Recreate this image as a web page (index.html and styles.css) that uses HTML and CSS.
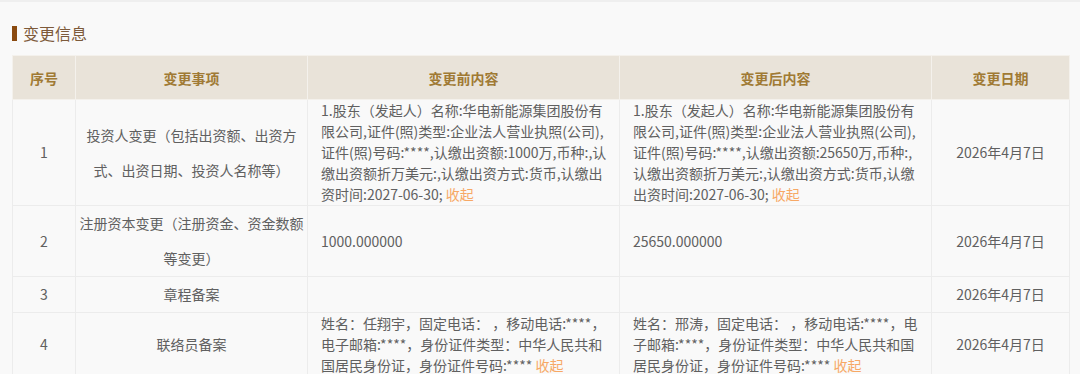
FILE: index.html
```html
<!DOCTYPE html>
<html lang="zh-CN">
<head>
<meta charset="utf-8">
<title>变更信息</title>
<link rel="stylesheet" href="styles.css">
</head>
<body>
<div class="page">
  <h2 class="section-title"><span class="marker"></span>变更信息</h2>
  <table class="change-table">
    <colgroup>
      <col class="c-no"><col class="c-item"><col class="c-before"><col class="c-after"><col class="c-date">
    </colgroup>
    <thead>
      <tr><th>序号</th><th>变更事项</th><th>变更前内容</th><th>变更后内容</th><th>变更日期</th></tr>
    </thead>
    <tbody>
      <tr>
        <td class="center">1</td>
        <td class="center item">投资人变更（包括出资额、出资方式、出资日期、投资人名称等）</td>
        <td class="content"><div class="txt">1.股东（发起人）名称:华电新能源集团股份有限公司,证件(照)类型:企业法人营业执照(公司),证件(照)号码:****,认缴出资额:1000万,币种:,认缴出资额折万美元:,认缴出资方式:货币,认缴出资时间:2027-06-30; <a class="toggle">收起</a></div></td>
        <td class="content"><div class="txt">1.股东（发起人）名称:华电新能源集团股份有限公司,证件(照)类型:企业法人营业执照(公司),证件(照)号码:****,认缴出资额:25650万,币种:,认缴出资额折万美元:,认缴出资方式:货币,认缴出资时间:2027-06-30; <a class="toggle">收起</a></div></td>
        <td class="center">2026年4月7日</td>
      </tr>
      <tr>
        <td class="center">2</td>
        <td class="center item">注册资本变更（注册资金、资金数额等变更）</td>
        <td class="content"><div class="txt">1000.000000</div></td>
        <td class="content"><div class="txt">25650.000000</div></td>
        <td class="center">2026年4月7日</td>
      </tr>
      <tr>
        <td class="center">3</td>
        <td class="center item">章程备案</td>
        <td class="content"></td>
        <td class="content"></td>
        <td class="center">2026年4月7日</td>
      </tr>
      <tr>
        <td class="center">4</td>
        <td class="center item">联络员备案</td>
        <td class="content"><div class="txt">姓名：任翔宇，固定电话： ，移动电话:****，电子邮箱:****，身份证件类型：中华人民共和国居民身份证，身份证件号码:**** <a class="toggle">收起</a></div></td>
        <td class="content"><div class="txt">姓名：邢涛，固定电话： ，移动电话:****，电子邮箱:****，身份证件类型：中华人民共和国居民身份证，身份证件号码:**** <a class="toggle">收起</a></div></td>
        <td class="center">2026年4月7日</td>
      </tr>
    </tbody>
  </table>
</div>
</body>
</html>
```
FILE: styles.css
```css
html, body {
  margin: 0;
  padding: 0;
  background: #f9f9f9;
}
body {
  font-family: "Noto Sans CJK SC", "Noto Sans", sans-serif;
  color: #606060;
  font-size: 14px;
  border-top: 2px solid #efefef;
}
.page {
  padding: 20px 11px 0 12px;
}
.section-title {
  display: flex;
  align-items: center;
  gap: 6px;
  margin: 0 0 11px 0;
  height: 22px;
  font-size: 16px;
  font-weight: normal;
  color: #7d5a3a;
  line-height: 22px;
}
.marker {
  width: 5px;
  height: 15px;
  background: #8a4a10;
}
.change-table {
  width: 1057px;
  border-collapse: collapse;
  table-layout: fixed;
}
.c-no { width: 63px; }
.c-item { width: 232px; }
.c-before { width: 312px; }
.c-after { width: 312px; }
.c-date { width: 138px; }
.change-table th {
  height: 43px;
  background: #e9e3d9;
  color: #a07a34;
  font-weight: bold;
  font-size: 14px;
  border: 1px solid #f4f1ec;
  padding: 0;
}
.change-table td {
  border: 1px solid #ececec;
  padding: 0;
  vertical-align: middle;
  line-height: 35px;
}
.change-table td.center {
  text-align: center;
}
.change-table td.item {
  padding: 0 3px;
}
.change-table td.content {
  padding: 0 12px 0 13px;
}
.txt {
  line-height: 21px;
  word-break: break-all;
}
.toggle {
  color: #f7a865;
  cursor: pointer;
}
```
